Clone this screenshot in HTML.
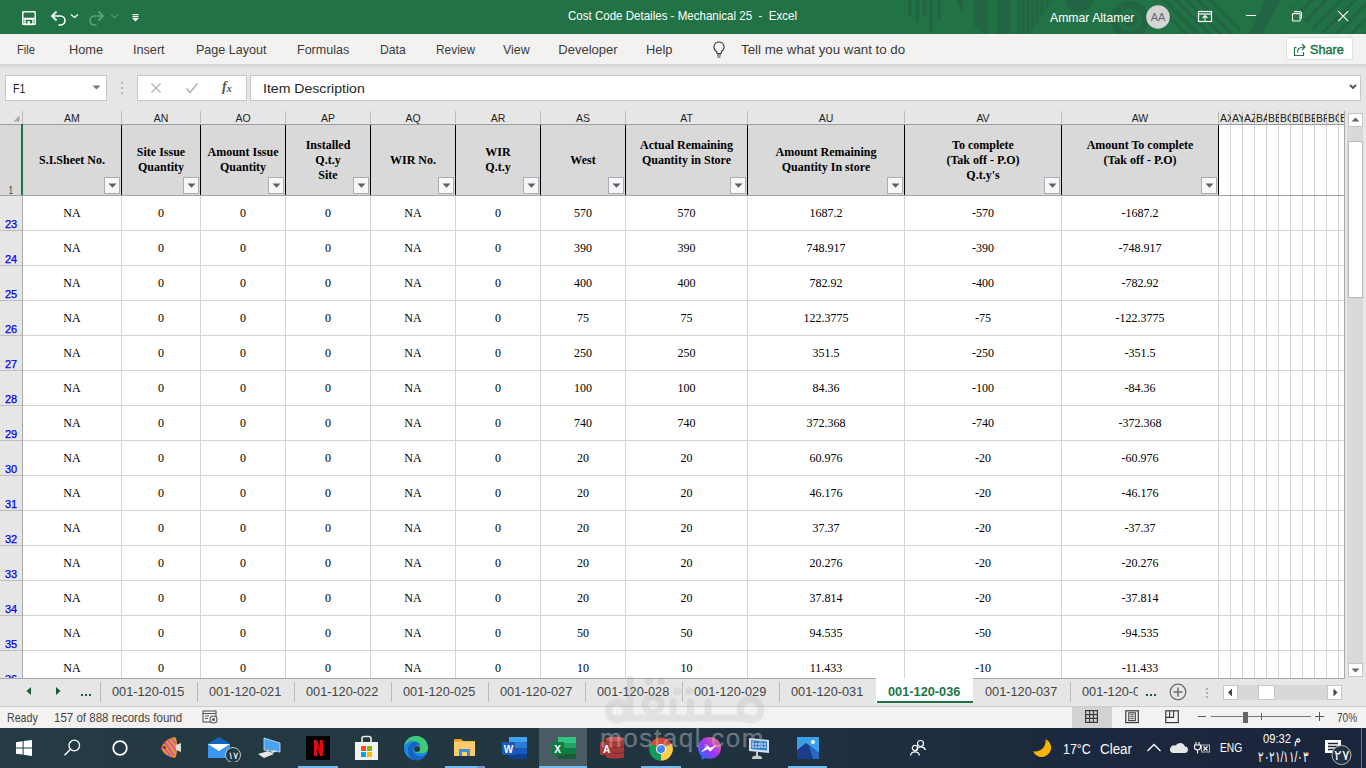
<!DOCTYPE html>
<html><head><meta charset="utf-8"><title>Excel</title>
<style>
html,body{margin:0;padding:0;width:1366px;height:768px;overflow:hidden;background:#e6e6e6;font-family:"Liberation Sans",sans-serif}
.r{position:absolute;display:block}
.t{position:absolute;white-space:pre;line-height:20px;height:20px}
</style></head><body>
<div class="r" style="left:0px;top:0px;width:1366px;height:34px;background:#217346"></div>
<svg class="r" style="left:880px;top:0px;" width="486" height="34" viewBox="0 0 486 34"><rect x="28.3" y="0" width="3.7" height="15.4" fill="#226443"/><rect x="35.3" y="0" width="4.0" height="22.7" fill="#226443"/><rect x="42.2" y="0" width="4.4" height="16.8" fill="#226443"/><rect x="49.1" y="0" width="4.1" height="31.5" fill="#226443"/><rect x="57.3" y="0" width="3.5" height="19.8" fill="#226443"/><path d="M75.5 0H83V13.5z" fill="#226443"/><path d="M94.20000000000005 0H107.39999999999998V34H105L94.20000000000005 26z" fill="#226443"/><rect x="117" y="0" width="12.6" height="34" fill="#226443"/><clipPath id="c1"><path d="M136 0H172L150 34H136z"/></clipPath><g clip-path="url(#c1)"><rect x="137.0" y="0" width="3.4" height="34" fill="#226443"/><rect x="141.7" y="0" width="3.4" height="34" fill="#226443"/><rect x="146.4" y="0" width="3.4" height="34" fill="#226443"/><rect x="151.1" y="0" width="3.4" height="34" fill="#226443"/><rect x="155.8" y="0" width="3.4" height="34" fill="#226443"/><rect x="160.5" y="0" width="3.4" height="34" fill="#226443"/><rect x="165.2" y="0" width="3.4" height="34" fill="#226443"/><rect x="169.9" y="0" width="3.4" height="34" fill="#226443"/></g><circle cx="199" cy="-2" r="14" fill="#226443"/><circle cx="250" cy="20" r="15.5" fill="none" stroke="#226443" stroke-width="7.6"/><circle cx="250" cy="20" r="7" fill="#226443"/><clipPath id="c2"><rect x="280" y="0" width="80" height="34"/></clipPath><g clip-path="url(#c2)"><path d="M270.0 0h4.5l34 34h-4.5z" fill="#226443"/><path d="M281.5 0h4.5l34 34h-4.5z" fill="#226443"/><path d="M293.0 0h4.5l34 34h-4.5z" fill="#226443"/><path d="M304.5 0h4.5l34 34h-4.5z" fill="#226443"/><path d="M316.0 0h4.5l34 34h-4.5z" fill="#226443"/><path d="M327.5 0h4.5l34 34h-4.5z" fill="#226443"/></g><path d="M385 0H400Q390 20 382 34H368Q377 20 385 0z" fill="#226443"/><clipPath id="c3"><path d="M410 8L420 0H486V34H438z"/></clipPath><g clip-path="url(#c3)"><path d="M415.0 0h5l-34 34h-5z" fill="#226443"/><path d="M429.6 0h5l-34 34h-5z" fill="#226443"/><path d="M444.2 0h5l-34 34h-5z" fill="#226443"/><path d="M458.8 0h5l-34 34h-5z" fill="#226443"/><path d="M473.4 0h5l-34 34h-5z" fill="#226443"/><path d="M488.0 0h5l-34 34h-5z" fill="#226443"/><path d="M502.6 0h5l-34 34h-5z" fill="#226443"/><path d="M517.2 0h5l-34 34h-5z" fill="#226443"/></g></svg>
<svg class="r" style="left:20px;top:9px;" width="18" height="18" viewBox="0 0 18 18"><rect x="2.75" y="2.75" width="12.5" height="12.5" rx="0.8" fill="none" stroke="#fff" stroke-width="1.5"/><path d="M2.75 9.5h12.5" stroke="#fff" stroke-width="1.5"/><rect x="5" y="10" width="8" height="5.5" fill="none" stroke="#fff" stroke-width="1.4"/><rect x="7.6" y="12" width="2.2" height="3.5" fill="#fff"/></svg>
<svg class="r" style="left:49px;top:9px;" width="18" height="18" viewBox="0 0 18 18"><path d="M4 7h7.5a4.5 4.5 0 0 1 0 9h-2" fill="none" stroke="#fff" stroke-width="1.6"/><path d="M7.5 2.5L3 7l4.5 4.5" fill="none" stroke="#fff" stroke-width="1.8"/></svg>
<svg class="r" style="left:70px;top:13px;" width="9" height="6" viewBox="0 0 9 6"><path d="M1 1.5l3.5 3 3.5-3" fill="none" stroke="#fff" stroke-width="1.3"/></svg>
<svg class="r" style="left:88px;top:9px;" width="18" height="18" viewBox="0 0 18 18"><path d="M14 7H6.5a4.5 4.5 0 0 0 0 9h2" fill="none" stroke="#5fa27c" stroke-width="1.6"/><path d="M10.5 2.5L15 7l-4.5 4.5" fill="none" stroke="#5fa27c" stroke-width="1.8"/></svg>
<svg class="r" style="left:110px;top:13px;" width="9" height="6" viewBox="0 0 9 6"><path d="M1 1.5l3.5 3 3.5-3" fill="none" stroke="#4f9670" stroke-width="1.1"/></svg>
<svg class="r" style="left:131px;top:13px;" width="9" height="9" viewBox="0 0 9 9"><rect x="1.5" y="1" width="6" height="1.2" fill="#fff"/><rect x="1.5" y="3" width="6" height="1.2" fill="#fff"/><path d="M1 5h7l-3.5 3.5z" fill="#fff"/></svg>
<div class="t" style="left:567.5px;top:6px;font-size:13px;font-family:'Liberation Sans', sans-serif;font-weight:400;color:#fff;transform:scaleX(0.8876);transform-origin:0 0;">Cost Code Detailes - Mechanical 25  -  Excel</div>
<div class="t" style="left:1050.2px;top:8px;font-size:13px;font-family:'Liberation Sans', sans-serif;font-weight:400;color:#fff;transform:scaleX(0.9411);transform-origin:0 0;">Ammar Altamer</div>
<svg class="r" style="left:1146px;top:5px;" width="24" height="24" viewBox="0 0 24 24"><circle cx="12" cy="12" r="11.8" fill="#d4d4d4"/><text x="12" y="16" font-family="Liberation Sans" font-size="11" fill="#66667a" text-anchor="middle">AA</text></svg>
<svg class="r" style="left:1197px;top:10px;" width="16" height="13" viewBox="0 0 16 13"><rect x="1.5" y="1.5" width="13" height="10" fill="none" stroke="#fff" stroke-width="1.2"/><line x1="1.5" y1="4" x2="14.5" y2="4" stroke="#fff" stroke-width="1.2"/><path d="M5.5 8l2.5-2.5 2.5 2.5M8 5.5v6" fill="none" stroke="#fff" stroke-width="1.1"/></svg>
<div class="r" style="left:1246px;top:15px;width:10px;height:1px;background:#fff"></div>
<svg class="r" style="left:1290px;top:10px;" width="14" height="13" viewBox="0 0 14 13"><rect x="2.5" y="3.6" width="7.6" height="7.4" rx="0.8" fill="none" stroke="#fff" stroke-width="1.1"/><path d="M4.2 1.6H10a1.5 1.5 0 0 1 1.5 1.5V8.6" fill="none" stroke="#fff" stroke-width="1.1"/></svg>
<svg class="r" style="left:1337px;top:10px;" width="12" height="12" viewBox="0 0 12 12"><path d="M1.2 1.2l10 10M11.2 1.2l-10 10" stroke="#fff" stroke-width="1.1"/></svg>
<div class="r" style="left:0px;top:34px;width:1366px;height:30px;background:#f3f2f1"></div>
<div class="r" style="left:0px;top:64px;width:1366px;height:5px;background:linear-gradient(#d2d2d2,#e6e6e6)"></div>
<div class="r" style="left:0px;top:69px;width:1366px;height:42px;background:#e6e6e6"></div>
<div class="t" style="left:17.3px;top:40px;font-size:13px;font-family:'Liberation Sans', sans-serif;font-weight:400;color:#3b3a39;transform:scaleX(0.8638);transform-origin:0 0;">File</div>
<div class="t" style="left:69.3px;top:40px;font-size:13px;font-family:'Liberation Sans', sans-serif;font-weight:400;color:#3b3a39;transform:scaleX(0.9831);transform-origin:0 0;">Home</div>
<div class="t" style="left:133.2px;top:40px;font-size:13px;font-family:'Liberation Sans', sans-serif;font-weight:400;color:#3b3a39;transform:scaleX(0.9718);transform-origin:0 0;">Insert</div>
<div class="t" style="left:196.4px;top:40px;font-size:13px;font-family:'Liberation Sans', sans-serif;font-weight:400;color:#3b3a39;transform:scaleX(0.9640);transform-origin:0 0;">Page Layout</div>
<div class="t" style="left:297.1px;top:40px;font-size:13px;font-family:'Liberation Sans', sans-serif;font-weight:400;color:#3b3a39;transform:scaleX(0.9633);transform-origin:0 0;">Formulas</div>
<div class="t" style="left:379.6px;top:40px;font-size:13px;font-family:'Liberation Sans', sans-serif;font-weight:400;color:#3b3a39;transform:scaleX(0.9392);transform-origin:0 0;">Data</div>
<div class="t" style="left:435.5px;top:40px;font-size:13px;font-family:'Liberation Sans', sans-serif;font-weight:400;color:#3b3a39;transform:scaleX(0.9146);transform-origin:0 0;">Review</div>
<div class="t" style="left:503.2px;top:40px;font-size:13px;font-family:'Liberation Sans', sans-serif;font-weight:400;color:#3b3a39;transform:scaleX(0.9552);transform-origin:0 0;">View</div>
<div class="t" style="left:558.3px;top:40px;font-size:13px;font-family:'Liberation Sans', sans-serif;font-weight:400;color:#3b3a39;">Developer</div>
<div class="t" style="left:645.9px;top:40px;font-size:13px;font-family:'Liberation Sans', sans-serif;font-weight:400;color:#3b3a39;transform:scaleX(0.9869);transform-origin:0 0;">Help</div>
<svg class="r" style="left:711px;top:40px;" width="16" height="19" viewBox="0 0 16 19"><path d="M8 2a5 5 0 0 0-3 9c.8.7 1 1.5 1 2.5h4c0-1 .2-1.8 1-2.5a5 5 0 0 0-3-9z" fill="none" stroke="#3b3a39" stroke-width="1.1"/><path d="M6 15h4M6.5 17h3" stroke="#3b3a39" stroke-width="1.1"/></svg>
<div class="t" style="left:740.9px;top:40px;font-size:13px;font-family:'Liberation Sans', sans-serif;font-weight:400;color:#3b3a39;transform:scaleX(1.0234);transform-origin:0 0;">Tell me what you want to do</div>
<div class="r" style="left:1286px;top:37px;width:67px;height:23px;background:#fff;border:1px solid #e1dfdd;border-radius:2px;box-sizing:border-box"></div>
<svg class="r" style="left:1293px;top:42px;" width="14" height="14" viewBox="0 0 14 14"><path d="M1.5 5.5v8h9v-3.5" fill="none" stroke="#217346" stroke-width="1.2"/><path d="M1.5 5.5h2" stroke="#217346" stroke-width="1.2"/><path d="M4.5 10.5c0-3.5 2.5-5.5 6.5-5.5M9 2l3 3-3 3" fill="none" stroke="#217346" stroke-width="1.2"/></svg>
<div class="t" style="left:1310.0px;top:40px;font-size:13px;font-family:'Liberation Sans', sans-serif;font-weight:400;color:#217346;transform:scaleX(0.9740);transform-origin:0 0;-webkit-text-stroke:0.45px #217346;">Share</div>
<div class="r" style="left:5px;top:75px;width:102px;height:26px;background:#fff;border:1px solid #c6c6c6;box-sizing:border-box"></div>
<div class="t" style="left:12.7px;top:79px;font-size:13px;font-family:'Liberation Sans', sans-serif;font-weight:400;color:#262626;transform:scaleX(0.8107);transform-origin:0 0;">F1</div>
<svg class="r" style="left:92px;top:85px;" width="9" height="5" viewBox="0 0 9 5"><path d="M0.5 0.5h8l-4 4z" fill="#777"/></svg>
<div class="r" style="left:121px;top:82px;width:2px;height:2px;background:#a6a6a6;border-radius:1px"></div>
<div class="r" style="left:121px;top:87px;width:2px;height:2px;background:#a6a6a6;border-radius:1px"></div>
<div class="r" style="left:121px;top:92px;width:2px;height:2px;background:#a6a6a6;border-radius:1px"></div>
<div class="r" style="left:137px;top:75px;width:110px;height:26px;background:#fff;border:1px solid #c6c6c6;box-sizing:border-box"></div>
<svg class="r" style="left:150px;top:82px;" width="12" height="12" viewBox="0 0 12 12"><path d="M1.5 1.5l9 9M10.5 1.5l-9 9" stroke="#b3b3b3" stroke-width="1.3"/></svg>
<svg class="r" style="left:185px;top:82px;" width="14" height="12" viewBox="0 0 14 12"><path d="M1.5 6.5l3.5 4 7.5-9" fill="none" stroke="#b3b3b3" stroke-width="1.6"/></svg>
<div class="t" style="left:222px;top:79px;font:italic bold 14px 'Liberation Serif', serif;color:#555">f<span style="font-size:10px;position:relative;top:1px">x</span></div>
<div class="r" style="left:250px;top:75px;width:1111px;height:26px;background:#fff;border:1px solid #c6c6c6;box-sizing:border-box"></div>
<div class="t" style="left:262.6px;top:79px;font-size:13px;font-family:'Liberation Sans', sans-serif;font-weight:400;color:#262626;transform:scaleX(1.0837);transform-origin:0 0;">Item Description</div>
<svg class="r" style="left:1349px;top:84px;" width="8" height="6" viewBox="0 0 8 6"><path d="M1 1l3 3 3-3" fill="none" stroke="#555" stroke-width="1.9"/></svg>
<div class="r" style="left:0px;top:111px;width:1347px;height:13px;background:#e6e6e6"></div>
<div class="r" style="left:0px;top:124px;width:1347px;height:1px;background:#9f9f9f"></div>
<svg class="r" style="left:13px;top:115px;" width="7" height="7" viewBox="0 0 7 7"><path d="M6.5 0.5v6h-6z" fill="#a9a9a9"/></svg>
<div class="r" style="left:22px;top:111px;width:1px;height:13px;background:#bcbcbc"></div>
<div class="r" style="left:121px;top:111px;width:1px;height:13px;background:#bcbcbc"></div>
<div class="t" style="left:64.1px;top:108px;font-size:10.5px;font-family:'Liberation Sans', sans-serif;font-weight:400;color:#222;">AM</div>
<div class="r" style="left:200px;top:111px;width:1px;height:13px;background:#bcbcbc"></div>
<div class="t" style="left:153.7px;top:108px;font-size:10.5px;font-family:'Liberation Sans', sans-serif;font-weight:400;color:#222;">AN</div>
<div class="r" style="left:285px;top:111px;width:1px;height:13px;background:#bcbcbc"></div>
<div class="t" style="left:235.4px;top:108px;font-size:10.5px;font-family:'Liberation Sans', sans-serif;font-weight:400;color:#222;">AO</div>
<div class="r" style="left:370px;top:111px;width:1px;height:13px;background:#bcbcbc"></div>
<div class="t" style="left:321.0px;top:108px;font-size:10.5px;font-family:'Liberation Sans', sans-serif;font-weight:400;color:#222;">AP</div>
<div class="r" style="left:455px;top:111px;width:1px;height:13px;background:#bcbcbc"></div>
<div class="t" style="left:405.4px;top:108px;font-size:10.5px;font-family:'Liberation Sans', sans-serif;font-weight:400;color:#222;">AQ</div>
<div class="r" style="left:540px;top:111px;width:1px;height:13px;background:#bcbcbc"></div>
<div class="t" style="left:490.7px;top:108px;font-size:10.5px;font-family:'Liberation Sans', sans-serif;font-weight:400;color:#222;">AR</div>
<div class="r" style="left:625px;top:111px;width:1px;height:13px;background:#bcbcbc"></div>
<div class="t" style="left:576.0px;top:108px;font-size:10.5px;font-family:'Liberation Sans', sans-serif;font-weight:400;color:#222;">AS</div>
<div class="r" style="left:747px;top:111px;width:1px;height:13px;background:#bcbcbc"></div>
<div class="t" style="left:680.2px;top:108px;font-size:10.5px;font-family:'Liberation Sans', sans-serif;font-weight:400;color:#222;">AT</div>
<div class="r" style="left:904px;top:111px;width:1px;height:13px;background:#bcbcbc"></div>
<div class="t" style="left:818.7px;top:108px;font-size:10.5px;font-family:'Liberation Sans', sans-serif;font-weight:400;color:#222;">AU</div>
<div class="r" style="left:1061px;top:111px;width:1px;height:13px;background:#bcbcbc"></div>
<div class="t" style="left:976.4px;top:108px;font-size:10.5px;font-family:'Liberation Sans', sans-serif;font-weight:400;color:#222;">AV</div>
<div class="r" style="left:1218px;top:111px;width:1px;height:13px;background:#bcbcbc"></div>
<div class="t" style="left:1131.7px;top:108px;font-size:10.5px;font-family:'Liberation Sans', sans-serif;font-weight:400;color:#222;">AW</div>
<div class="r" style="left:1230px;top:111px;width:1px;height:13px;background:#bcbcbc"></div>
<div class="r" style="left:1219px;top:111px;width:12px;height:13px;overflow:hidden"><div class="t" style="left:1px;top:-3px;font-size:10.5px;color:#222">AX</div></div>
<div class="r" style="left:1242px;top:111px;width:1px;height:13px;background:#bcbcbc"></div>
<div class="r" style="left:1231px;top:111px;width:12px;height:13px;overflow:hidden"><div class="t" style="left:1px;top:-3px;font-size:10.5px;color:#222">AY</div></div>
<div class="r" style="left:1254px;top:111px;width:1px;height:13px;background:#bcbcbc"></div>
<div class="r" style="left:1243px;top:111px;width:12px;height:13px;overflow:hidden"><div class="t" style="left:1px;top:-3px;font-size:10.5px;color:#222">AZ</div></div>
<div class="r" style="left:1266px;top:111px;width:1px;height:13px;background:#bcbcbc"></div>
<div class="r" style="left:1255px;top:111px;width:12px;height:13px;overflow:hidden"><div class="t" style="left:1px;top:-3px;font-size:10.5px;color:#222">BA</div></div>
<div class="r" style="left:1278px;top:111px;width:1px;height:13px;background:#bcbcbc"></div>
<div class="r" style="left:1267px;top:111px;width:12px;height:13px;overflow:hidden"><div class="t" style="left:1px;top:-3px;font-size:10.5px;color:#222">BB</div></div>
<div class="r" style="left:1290px;top:111px;width:1px;height:13px;background:#bcbcbc"></div>
<div class="r" style="left:1279px;top:111px;width:12px;height:13px;overflow:hidden"><div class="t" style="left:1px;top:-3px;font-size:10.5px;color:#222">BC</div></div>
<div class="r" style="left:1302px;top:111px;width:1px;height:13px;background:#bcbcbc"></div>
<div class="r" style="left:1291px;top:111px;width:12px;height:13px;overflow:hidden"><div class="t" style="left:1px;top:-3px;font-size:10.5px;color:#222">BD</div></div>
<div class="r" style="left:1314px;top:111px;width:1px;height:13px;background:#bcbcbc"></div>
<div class="r" style="left:1303px;top:111px;width:12px;height:13px;overflow:hidden"><div class="t" style="left:1px;top:-3px;font-size:10.5px;color:#222">BE</div></div>
<div class="r" style="left:1326px;top:111px;width:1px;height:13px;background:#bcbcbc"></div>
<div class="r" style="left:1315px;top:111px;width:12px;height:13px;overflow:hidden"><div class="t" style="left:1px;top:-3px;font-size:10.5px;color:#222">BF</div></div>
<div class="r" style="left:1338px;top:111px;width:1px;height:13px;background:#bcbcbc"></div>
<div class="r" style="left:1327px;top:111px;width:12px;height:13px;overflow:hidden"><div class="t" style="left:1px;top:-3px;font-size:10.5px;color:#222">BG</div></div>
<div class="r" style="left:1350px;top:111px;width:1px;height:13px;background:#bcbcbc"></div>
<div class="r" style="left:1339px;top:111px;width:12px;height:13px;overflow:hidden"><div class="t" style="left:1px;top:-3px;font-size:10.5px;color:#222">BH</div></div>
<div class="r" style="left:0px;top:125px;width:22px;height:553px;background:#e6e6e6"></div>
<div class="r" style="left:22px;top:125px;width:1px;height:553px;background:#a9a9a9"></div>
<div class="r" style="left:0px;top:125px;width:21px;height:70px;background:#d9d9d9"></div>
<div class="r" style="left:21px;top:124px;width:2px;height:71px;background:#217346"></div>
<div class="t" style="left:9.3px;top:181px;font-size:10px;font-family:'Liberation Sans', sans-serif;font-weight:400;color:#444;transform:scaleX(0.6652);transform-origin:0 0;-webkit-text-stroke:0.2px #444;">1</div>
<div class="r" style="left:23px;top:125px;width:1322px;height:70px;background:#d9d9d9"></div>
<div class="r" style="left:1218px;top:125px;width:127px;height:70px;background:#fff"></div>
<div class="r" style="left:0px;top:195px;width:1345px;height:1px;background:#a3a3a3"></div>
<div class="r" style="left:121px;top:125px;width:1px;height:70px;background:#000"></div>
<div class="r" style="left:200px;top:125px;width:1px;height:70px;background:#000"></div>
<div class="r" style="left:285px;top:125px;width:1px;height:70px;background:#000"></div>
<div class="r" style="left:370px;top:125px;width:1px;height:70px;background:#000"></div>
<div class="r" style="left:455px;top:125px;width:1px;height:70px;background:#000"></div>
<div class="r" style="left:540px;top:125px;width:1px;height:70px;background:#000"></div>
<div class="r" style="left:625px;top:125px;width:1px;height:70px;background:#000"></div>
<div class="r" style="left:747px;top:125px;width:1px;height:70px;background:#000"></div>
<div class="r" style="left:904px;top:125px;width:1px;height:70px;background:#000"></div>
<div class="r" style="left:1061px;top:125px;width:1px;height:70px;background:#000"></div>
<div class="r" style="left:1218px;top:125px;width:1px;height:70px;background:#000"></div>
<div class="r" style="left:1230px;top:125px;width:1px;height:70px;background:#d4d4d4"></div>
<div class="r" style="left:1242px;top:125px;width:1px;height:70px;background:#d4d4d4"></div>
<div class="r" style="left:1254px;top:125px;width:1px;height:70px;background:#d4d4d4"></div>
<div class="r" style="left:1266px;top:125px;width:1px;height:70px;background:#d4d4d4"></div>
<div class="r" style="left:1278px;top:125px;width:1px;height:70px;background:#d4d4d4"></div>
<div class="r" style="left:1290px;top:125px;width:1px;height:70px;background:#d4d4d4"></div>
<div class="r" style="left:1302px;top:125px;width:1px;height:70px;background:#d4d4d4"></div>
<div class="r" style="left:1314px;top:125px;width:1px;height:70px;background:#d4d4d4"></div>
<div class="r" style="left:1326px;top:125px;width:1px;height:70px;background:#d4d4d4"></div>
<div class="r" style="left:1338px;top:125px;width:1px;height:70px;background:#d4d4d4"></div>
<div class="r" style="left:1350px;top:125px;width:1px;height:70px;background:#d4d4d4"></div>
<div class="t" style="left:23px;width:98px;top:152.5px;line-height:20px;text-align:center;font:bold 12px 'Liberation Serif', serif;color:#000">S.I.Sheet No.</div>
<div class="r" style="left:104px;top:177px;width:16px;height:17px;background:#f7f7f9;border:1px solid #a8aeb4;box-sizing:border-box"></div>
<svg class="r" style="left:108px;top:183px;" width="9" height="5" viewBox="0 0 9 5"><path d="M0.5 0.5h8l-4 4.2z" fill="#5f5f5f"/></svg>
<div class="t" style="left:122px;width:78px;top:145.0px;line-height:20px;text-align:center;font:bold 12px 'Liberation Serif', serif;color:#000">Site Issue</div>
<div class="t" style="left:122px;width:78px;top:160.0px;line-height:20px;text-align:center;font:bold 12px 'Liberation Serif', serif;color:#000">Quantity</div>
<div class="r" style="left:183px;top:177px;width:16px;height:17px;background:#f7f7f9;border:1px solid #a8aeb4;box-sizing:border-box"></div>
<svg class="r" style="left:187px;top:183px;" width="9" height="5" viewBox="0 0 9 5"><path d="M0.5 0.5h8l-4 4.2z" fill="#5f5f5f"/></svg>
<div class="t" style="left:201px;width:84px;top:145.0px;line-height:20px;text-align:center;font:bold 12px 'Liberation Serif', serif;color:#000">Amount Issue</div>
<div class="t" style="left:201px;width:84px;top:160.0px;line-height:20px;text-align:center;font:bold 12px 'Liberation Serif', serif;color:#000">Quantity</div>
<div class="r" style="left:268px;top:177px;width:16px;height:17px;background:#f7f7f9;border:1px solid #a8aeb4;box-sizing:border-box"></div>
<svg class="r" style="left:272px;top:183px;" width="9" height="5" viewBox="0 0 9 5"><path d="M0.5 0.5h8l-4 4.2z" fill="#5f5f5f"/></svg>
<div class="t" style="left:286px;width:84px;top:137.5px;line-height:20px;text-align:center;font:bold 12px 'Liberation Serif', serif;color:#000">Installed</div>
<div class="t" style="left:286px;width:84px;top:152.5px;line-height:20px;text-align:center;font:bold 12px 'Liberation Serif', serif;color:#000">Q.t.y</div>
<div class="t" style="left:286px;width:84px;top:167.5px;line-height:20px;text-align:center;font:bold 12px 'Liberation Serif', serif;color:#000">Site</div>
<div class="r" style="left:353px;top:177px;width:16px;height:17px;background:#f7f7f9;border:1px solid #a8aeb4;box-sizing:border-box"></div>
<svg class="r" style="left:357px;top:183px;" width="9" height="5" viewBox="0 0 9 5"><path d="M0.5 0.5h8l-4 4.2z" fill="#5f5f5f"/></svg>
<div class="t" style="left:371px;width:84px;top:152.5px;line-height:20px;text-align:center;font:bold 12px 'Liberation Serif', serif;color:#000">WIR No.</div>
<div class="r" style="left:438px;top:177px;width:16px;height:17px;background:#f7f7f9;border:1px solid #a8aeb4;box-sizing:border-box"></div>
<svg class="r" style="left:442px;top:183px;" width="9" height="5" viewBox="0 0 9 5"><path d="M0.5 0.5h8l-4 4.2z" fill="#5f5f5f"/></svg>
<div class="t" style="left:456px;width:84px;top:145.0px;line-height:20px;text-align:center;font:bold 12px 'Liberation Serif', serif;color:#000">WIR</div>
<div class="t" style="left:456px;width:84px;top:160.0px;line-height:20px;text-align:center;font:bold 12px 'Liberation Serif', serif;color:#000">Q.t.y</div>
<div class="r" style="left:523px;top:177px;width:16px;height:17px;background:#f7f7f9;border:1px solid #a8aeb4;box-sizing:border-box"></div>
<svg class="r" style="left:527px;top:183px;" width="9" height="5" viewBox="0 0 9 5"><path d="M0.5 0.5h8l-4 4.2z" fill="#5f5f5f"/></svg>
<div class="t" style="left:541px;width:84px;top:152.5px;line-height:20px;text-align:center;font:bold 12px 'Liberation Serif', serif;color:#000">West</div>
<div class="r" style="left:608px;top:177px;width:16px;height:17px;background:#f7f7f9;border:1px solid #a8aeb4;box-sizing:border-box"></div>
<svg class="r" style="left:612px;top:183px;" width="9" height="5" viewBox="0 0 9 5"><path d="M0.5 0.5h8l-4 4.2z" fill="#5f5f5f"/></svg>
<div class="t" style="left:626px;width:121px;top:137.5px;line-height:20px;text-align:center;font:bold 12px 'Liberation Serif', serif;color:#000">Actual Remaining</div>
<div class="t" style="left:626px;width:121px;top:152.5px;line-height:20px;text-align:center;font:bold 12px 'Liberation Serif', serif;color:#000">Quantity in Store</div>
<div class="r" style="left:730px;top:177px;width:16px;height:17px;background:#f7f7f9;border:1px solid #a8aeb4;box-sizing:border-box"></div>
<svg class="r" style="left:734px;top:183px;" width="9" height="5" viewBox="0 0 9 5"><path d="M0.5 0.5h8l-4 4.2z" fill="#5f5f5f"/></svg>
<div class="t" style="left:748px;width:156px;top:145.0px;line-height:20px;text-align:center;font:bold 12px 'Liberation Serif', serif;color:#000">Amount Remaining</div>
<div class="t" style="left:748px;width:156px;top:160.0px;line-height:20px;text-align:center;font:bold 12px 'Liberation Serif', serif;color:#000">Quantity In store</div>
<div class="r" style="left:887px;top:177px;width:16px;height:17px;background:#f7f7f9;border:1px solid #a8aeb4;box-sizing:border-box"></div>
<svg class="r" style="left:891px;top:183px;" width="9" height="5" viewBox="0 0 9 5"><path d="M0.5 0.5h8l-4 4.2z" fill="#5f5f5f"/></svg>
<div class="t" style="left:905px;width:156px;top:137.5px;line-height:20px;text-align:center;font:bold 12px 'Liberation Serif', serif;color:#000">To complete</div>
<div class="t" style="left:905px;width:156px;top:152.5px;line-height:20px;text-align:center;font:bold 12px 'Liberation Serif', serif;color:#000">(Tak off - P.O)</div>
<div class="t" style="left:905px;width:156px;top:167.5px;line-height:20px;text-align:center;font:bold 12px 'Liberation Serif', serif;color:#000">Q.t.y's</div>
<div class="r" style="left:1044px;top:177px;width:16px;height:17px;background:#f7f7f9;border:1px solid #a8aeb4;box-sizing:border-box"></div>
<svg class="r" style="left:1048px;top:183px;" width="9" height="5" viewBox="0 0 9 5"><path d="M0.5 0.5h8l-4 4.2z" fill="#5f5f5f"/></svg>
<div class="t" style="left:1062px;width:156px;top:137.5px;line-height:20px;text-align:center;font:bold 12px 'Liberation Serif', serif;color:#000">Amount To complete</div>
<div class="t" style="left:1062px;width:156px;top:152.5px;line-height:20px;text-align:center;font:bold 12px 'Liberation Serif', serif;color:#000">(Tak off - P.O)</div>
<div class="r" style="left:1201px;top:177px;width:16px;height:17px;background:#f7f7f9;border:1px solid #a8aeb4;box-sizing:border-box"></div>
<svg class="r" style="left:1205px;top:183px;" width="9" height="5" viewBox="0 0 9 5"><path d="M0.5 0.5h8l-4 4.2z" fill="#5f5f5f"/></svg>
<div class="r" style="left:23px;top:196px;width:1322px;height:482px;background:#fff"></div>
<div class="r" style="left:121px;top:196px;width:1px;height:482px;background:#d4d4d4"></div>
<div class="r" style="left:200px;top:196px;width:1px;height:482px;background:#d4d4d4"></div>
<div class="r" style="left:285px;top:196px;width:1px;height:482px;background:#d4d4d4"></div>
<div class="r" style="left:370px;top:196px;width:1px;height:482px;background:#d4d4d4"></div>
<div class="r" style="left:455px;top:196px;width:1px;height:482px;background:#d4d4d4"></div>
<div class="r" style="left:540px;top:196px;width:1px;height:482px;background:#d4d4d4"></div>
<div class="r" style="left:625px;top:196px;width:1px;height:482px;background:#d4d4d4"></div>
<div class="r" style="left:747px;top:196px;width:1px;height:482px;background:#d4d4d4"></div>
<div class="r" style="left:904px;top:196px;width:1px;height:482px;background:#d4d4d4"></div>
<div class="r" style="left:1061px;top:196px;width:1px;height:482px;background:#d4d4d4"></div>
<div class="r" style="left:1218px;top:196px;width:1px;height:482px;background:#d4d4d4"></div>
<div class="r" style="left:1230px;top:196px;width:1px;height:482px;background:#d4d4d4"></div>
<div class="r" style="left:1242px;top:196px;width:1px;height:482px;background:#d4d4d4"></div>
<div class="r" style="left:1254px;top:196px;width:1px;height:482px;background:#d4d4d4"></div>
<div class="r" style="left:1266px;top:196px;width:1px;height:482px;background:#d4d4d4"></div>
<div class="r" style="left:1278px;top:196px;width:1px;height:482px;background:#d4d4d4"></div>
<div class="r" style="left:1290px;top:196px;width:1px;height:482px;background:#d4d4d4"></div>
<div class="r" style="left:1302px;top:196px;width:1px;height:482px;background:#d4d4d4"></div>
<div class="r" style="left:1314px;top:196px;width:1px;height:482px;background:#d4d4d4"></div>
<div class="r" style="left:1326px;top:196px;width:1px;height:482px;background:#d4d4d4"></div>
<div class="r" style="left:1338px;top:196px;width:1px;height:482px;background:#d4d4d4"></div>
<div class="r" style="left:1350px;top:196px;width:1px;height:482px;background:#d4d4d4"></div>
<div class="r" style="left:23px;top:230px;width:1322px;height:1px;background:#d4d4d4"></div>
<div class="r" style="left:0px;top:230px;width:22px;height:1px;background:#bdbdbd"></div>
<div class="t" style="left:5.0px;top:215px;font-size:10px;font-family:'Liberation Sans', sans-serif;font-weight:400;color:#0000f0;transform:scaleX(1.0966);transform-origin:0 0;-webkit-text-stroke:0.25px #0000f0;">23</div>
<div class="t" style="left:23px;width:98px;top:206px;line-height:20px;text-align:center;font:12px 'Liberation Serif', serif;color:#000">NA</div>
<div class="t" style="left:122px;width:78px;top:206px;line-height:20px;text-align:center;font:12px 'Liberation Serif', serif;color:#000">0</div>
<div class="t" style="left:201px;width:84px;top:206px;line-height:20px;text-align:center;font:12px 'Liberation Serif', serif;color:#000">0</div>
<div class="t" style="left:286px;width:84px;top:206px;line-height:20px;text-align:center;font:12px 'Liberation Serif', serif;color:#000">0</div>
<div class="t" style="left:371px;width:84px;top:206px;line-height:20px;text-align:center;font:12px 'Liberation Serif', serif;color:#000">NA</div>
<div class="t" style="left:456px;width:84px;top:206px;line-height:20px;text-align:center;font:12px 'Liberation Serif', serif;color:#000">0</div>
<div class="t" style="left:541px;width:84px;top:206px;line-height:20px;text-align:center;font:12px 'Liberation Serif', serif;color:#000">570</div>
<div class="t" style="left:626px;width:121px;top:206px;line-height:20px;text-align:center;font:12px 'Liberation Serif', serif;color:#000">570</div>
<div class="t" style="left:748px;width:156px;top:206px;line-height:20px;text-align:center;font:12px 'Liberation Serif', serif;color:#000">1687.2</div>
<div class="t" style="left:905px;width:156px;top:206px;line-height:20px;text-align:center;font:12px 'Liberation Serif', serif;color:#000">-570</div>
<div class="t" style="left:1062px;width:156px;top:206px;line-height:20px;text-align:center;font:12px 'Liberation Serif', serif;color:#000">-1687.2</div>
<div class="r" style="left:23px;top:265px;width:1322px;height:1px;background:#d4d4d4"></div>
<div class="r" style="left:0px;top:265px;width:22px;height:1px;background:#bdbdbd"></div>
<div class="t" style="left:5.0px;top:250px;font-size:10px;font-family:'Liberation Sans', sans-serif;font-weight:400;color:#0000f0;transform:scaleX(1.0966);transform-origin:0 0;-webkit-text-stroke:0.25px #0000f0;">24</div>
<div class="t" style="left:23px;width:98px;top:241px;line-height:20px;text-align:center;font:12px 'Liberation Serif', serif;color:#000">NA</div>
<div class="t" style="left:122px;width:78px;top:241px;line-height:20px;text-align:center;font:12px 'Liberation Serif', serif;color:#000">0</div>
<div class="t" style="left:201px;width:84px;top:241px;line-height:20px;text-align:center;font:12px 'Liberation Serif', serif;color:#000">0</div>
<div class="t" style="left:286px;width:84px;top:241px;line-height:20px;text-align:center;font:12px 'Liberation Serif', serif;color:#000">0</div>
<div class="t" style="left:371px;width:84px;top:241px;line-height:20px;text-align:center;font:12px 'Liberation Serif', serif;color:#000">NA</div>
<div class="t" style="left:456px;width:84px;top:241px;line-height:20px;text-align:center;font:12px 'Liberation Serif', serif;color:#000">0</div>
<div class="t" style="left:541px;width:84px;top:241px;line-height:20px;text-align:center;font:12px 'Liberation Serif', serif;color:#000">390</div>
<div class="t" style="left:626px;width:121px;top:241px;line-height:20px;text-align:center;font:12px 'Liberation Serif', serif;color:#000">390</div>
<div class="t" style="left:748px;width:156px;top:241px;line-height:20px;text-align:center;font:12px 'Liberation Serif', serif;color:#000">748.917</div>
<div class="t" style="left:905px;width:156px;top:241px;line-height:20px;text-align:center;font:12px 'Liberation Serif', serif;color:#000">-390</div>
<div class="t" style="left:1062px;width:156px;top:241px;line-height:20px;text-align:center;font:12px 'Liberation Serif', serif;color:#000">-748.917</div>
<div class="r" style="left:23px;top:300px;width:1322px;height:1px;background:#d4d4d4"></div>
<div class="r" style="left:0px;top:300px;width:22px;height:1px;background:#bdbdbd"></div>
<div class="t" style="left:5.0px;top:285px;font-size:10px;font-family:'Liberation Sans', sans-serif;font-weight:400;color:#0000f0;transform:scaleX(1.0966);transform-origin:0 0;-webkit-text-stroke:0.25px #0000f0;">25</div>
<div class="t" style="left:23px;width:98px;top:276px;line-height:20px;text-align:center;font:12px 'Liberation Serif', serif;color:#000">NA</div>
<div class="t" style="left:122px;width:78px;top:276px;line-height:20px;text-align:center;font:12px 'Liberation Serif', serif;color:#000">0</div>
<div class="t" style="left:201px;width:84px;top:276px;line-height:20px;text-align:center;font:12px 'Liberation Serif', serif;color:#000">0</div>
<div class="t" style="left:286px;width:84px;top:276px;line-height:20px;text-align:center;font:12px 'Liberation Serif', serif;color:#000">0</div>
<div class="t" style="left:371px;width:84px;top:276px;line-height:20px;text-align:center;font:12px 'Liberation Serif', serif;color:#000">NA</div>
<div class="t" style="left:456px;width:84px;top:276px;line-height:20px;text-align:center;font:12px 'Liberation Serif', serif;color:#000">0</div>
<div class="t" style="left:541px;width:84px;top:276px;line-height:20px;text-align:center;font:12px 'Liberation Serif', serif;color:#000">400</div>
<div class="t" style="left:626px;width:121px;top:276px;line-height:20px;text-align:center;font:12px 'Liberation Serif', serif;color:#000">400</div>
<div class="t" style="left:748px;width:156px;top:276px;line-height:20px;text-align:center;font:12px 'Liberation Serif', serif;color:#000">782.92</div>
<div class="t" style="left:905px;width:156px;top:276px;line-height:20px;text-align:center;font:12px 'Liberation Serif', serif;color:#000">-400</div>
<div class="t" style="left:1062px;width:156px;top:276px;line-height:20px;text-align:center;font:12px 'Liberation Serif', serif;color:#000">-782.92</div>
<div class="r" style="left:23px;top:335px;width:1322px;height:1px;background:#d4d4d4"></div>
<div class="r" style="left:0px;top:335px;width:22px;height:1px;background:#bdbdbd"></div>
<div class="t" style="left:5.0px;top:320px;font-size:10px;font-family:'Liberation Sans', sans-serif;font-weight:400;color:#0000f0;transform:scaleX(1.0966);transform-origin:0 0;-webkit-text-stroke:0.25px #0000f0;">26</div>
<div class="t" style="left:23px;width:98px;top:311px;line-height:20px;text-align:center;font:12px 'Liberation Serif', serif;color:#000">NA</div>
<div class="t" style="left:122px;width:78px;top:311px;line-height:20px;text-align:center;font:12px 'Liberation Serif', serif;color:#000">0</div>
<div class="t" style="left:201px;width:84px;top:311px;line-height:20px;text-align:center;font:12px 'Liberation Serif', serif;color:#000">0</div>
<div class="t" style="left:286px;width:84px;top:311px;line-height:20px;text-align:center;font:12px 'Liberation Serif', serif;color:#000">0</div>
<div class="t" style="left:371px;width:84px;top:311px;line-height:20px;text-align:center;font:12px 'Liberation Serif', serif;color:#000">NA</div>
<div class="t" style="left:456px;width:84px;top:311px;line-height:20px;text-align:center;font:12px 'Liberation Serif', serif;color:#000">0</div>
<div class="t" style="left:541px;width:84px;top:311px;line-height:20px;text-align:center;font:12px 'Liberation Serif', serif;color:#000">75</div>
<div class="t" style="left:626px;width:121px;top:311px;line-height:20px;text-align:center;font:12px 'Liberation Serif', serif;color:#000">75</div>
<div class="t" style="left:748px;width:156px;top:311px;line-height:20px;text-align:center;font:12px 'Liberation Serif', serif;color:#000">122.3775</div>
<div class="t" style="left:905px;width:156px;top:311px;line-height:20px;text-align:center;font:12px 'Liberation Serif', serif;color:#000">-75</div>
<div class="t" style="left:1062px;width:156px;top:311px;line-height:20px;text-align:center;font:12px 'Liberation Serif', serif;color:#000">-122.3775</div>
<div class="r" style="left:23px;top:370px;width:1322px;height:1px;background:#d4d4d4"></div>
<div class="r" style="left:0px;top:370px;width:22px;height:1px;background:#bdbdbd"></div>
<div class="t" style="left:5.0px;top:355px;font-size:10px;font-family:'Liberation Sans', sans-serif;font-weight:400;color:#0000f0;transform:scaleX(1.0966);transform-origin:0 0;-webkit-text-stroke:0.25px #0000f0;">27</div>
<div class="t" style="left:23px;width:98px;top:346px;line-height:20px;text-align:center;font:12px 'Liberation Serif', serif;color:#000">NA</div>
<div class="t" style="left:122px;width:78px;top:346px;line-height:20px;text-align:center;font:12px 'Liberation Serif', serif;color:#000">0</div>
<div class="t" style="left:201px;width:84px;top:346px;line-height:20px;text-align:center;font:12px 'Liberation Serif', serif;color:#000">0</div>
<div class="t" style="left:286px;width:84px;top:346px;line-height:20px;text-align:center;font:12px 'Liberation Serif', serif;color:#000">0</div>
<div class="t" style="left:371px;width:84px;top:346px;line-height:20px;text-align:center;font:12px 'Liberation Serif', serif;color:#000">NA</div>
<div class="t" style="left:456px;width:84px;top:346px;line-height:20px;text-align:center;font:12px 'Liberation Serif', serif;color:#000">0</div>
<div class="t" style="left:541px;width:84px;top:346px;line-height:20px;text-align:center;font:12px 'Liberation Serif', serif;color:#000">250</div>
<div class="t" style="left:626px;width:121px;top:346px;line-height:20px;text-align:center;font:12px 'Liberation Serif', serif;color:#000">250</div>
<div class="t" style="left:748px;width:156px;top:346px;line-height:20px;text-align:center;font:12px 'Liberation Serif', serif;color:#000">351.5</div>
<div class="t" style="left:905px;width:156px;top:346px;line-height:20px;text-align:center;font:12px 'Liberation Serif', serif;color:#000">-250</div>
<div class="t" style="left:1062px;width:156px;top:346px;line-height:20px;text-align:center;font:12px 'Liberation Serif', serif;color:#000">-351.5</div>
<div class="r" style="left:23px;top:405px;width:1322px;height:1px;background:#d4d4d4"></div>
<div class="r" style="left:0px;top:405px;width:22px;height:1px;background:#bdbdbd"></div>
<div class="t" style="left:5.0px;top:390px;font-size:10px;font-family:'Liberation Sans', sans-serif;font-weight:400;color:#0000f0;transform:scaleX(1.0966);transform-origin:0 0;-webkit-text-stroke:0.25px #0000f0;">28</div>
<div class="t" style="left:23px;width:98px;top:381px;line-height:20px;text-align:center;font:12px 'Liberation Serif', serif;color:#000">NA</div>
<div class="t" style="left:122px;width:78px;top:381px;line-height:20px;text-align:center;font:12px 'Liberation Serif', serif;color:#000">0</div>
<div class="t" style="left:201px;width:84px;top:381px;line-height:20px;text-align:center;font:12px 'Liberation Serif', serif;color:#000">0</div>
<div class="t" style="left:286px;width:84px;top:381px;line-height:20px;text-align:center;font:12px 'Liberation Serif', serif;color:#000">0</div>
<div class="t" style="left:371px;width:84px;top:381px;line-height:20px;text-align:center;font:12px 'Liberation Serif', serif;color:#000">NA</div>
<div class="t" style="left:456px;width:84px;top:381px;line-height:20px;text-align:center;font:12px 'Liberation Serif', serif;color:#000">0</div>
<div class="t" style="left:541px;width:84px;top:381px;line-height:20px;text-align:center;font:12px 'Liberation Serif', serif;color:#000">100</div>
<div class="t" style="left:626px;width:121px;top:381px;line-height:20px;text-align:center;font:12px 'Liberation Serif', serif;color:#000">100</div>
<div class="t" style="left:748px;width:156px;top:381px;line-height:20px;text-align:center;font:12px 'Liberation Serif', serif;color:#000">84.36</div>
<div class="t" style="left:905px;width:156px;top:381px;line-height:20px;text-align:center;font:12px 'Liberation Serif', serif;color:#000">-100</div>
<div class="t" style="left:1062px;width:156px;top:381px;line-height:20px;text-align:center;font:12px 'Liberation Serif', serif;color:#000">-84.36</div>
<div class="r" style="left:23px;top:440px;width:1322px;height:1px;background:#d4d4d4"></div>
<div class="r" style="left:0px;top:440px;width:22px;height:1px;background:#bdbdbd"></div>
<div class="t" style="left:5.0px;top:425px;font-size:10px;font-family:'Liberation Sans', sans-serif;font-weight:400;color:#0000f0;transform:scaleX(1.0966);transform-origin:0 0;-webkit-text-stroke:0.25px #0000f0;">29</div>
<div class="t" style="left:23px;width:98px;top:416px;line-height:20px;text-align:center;font:12px 'Liberation Serif', serif;color:#000">NA</div>
<div class="t" style="left:122px;width:78px;top:416px;line-height:20px;text-align:center;font:12px 'Liberation Serif', serif;color:#000">0</div>
<div class="t" style="left:201px;width:84px;top:416px;line-height:20px;text-align:center;font:12px 'Liberation Serif', serif;color:#000">0</div>
<div class="t" style="left:286px;width:84px;top:416px;line-height:20px;text-align:center;font:12px 'Liberation Serif', serif;color:#000">0</div>
<div class="t" style="left:371px;width:84px;top:416px;line-height:20px;text-align:center;font:12px 'Liberation Serif', serif;color:#000">NA</div>
<div class="t" style="left:456px;width:84px;top:416px;line-height:20px;text-align:center;font:12px 'Liberation Serif', serif;color:#000">0</div>
<div class="t" style="left:541px;width:84px;top:416px;line-height:20px;text-align:center;font:12px 'Liberation Serif', serif;color:#000">740</div>
<div class="t" style="left:626px;width:121px;top:416px;line-height:20px;text-align:center;font:12px 'Liberation Serif', serif;color:#000">740</div>
<div class="t" style="left:748px;width:156px;top:416px;line-height:20px;text-align:center;font:12px 'Liberation Serif', serif;color:#000">372.368</div>
<div class="t" style="left:905px;width:156px;top:416px;line-height:20px;text-align:center;font:12px 'Liberation Serif', serif;color:#000">-740</div>
<div class="t" style="left:1062px;width:156px;top:416px;line-height:20px;text-align:center;font:12px 'Liberation Serif', serif;color:#000">-372.368</div>
<div class="r" style="left:23px;top:475px;width:1322px;height:1px;background:#d4d4d4"></div>
<div class="r" style="left:0px;top:475px;width:22px;height:1px;background:#bdbdbd"></div>
<div class="t" style="left:5.0px;top:460px;font-size:10px;font-family:'Liberation Sans', sans-serif;font-weight:400;color:#0000f0;transform:scaleX(1.0966);transform-origin:0 0;-webkit-text-stroke:0.25px #0000f0;">30</div>
<div class="t" style="left:23px;width:98px;top:451px;line-height:20px;text-align:center;font:12px 'Liberation Serif', serif;color:#000">NA</div>
<div class="t" style="left:122px;width:78px;top:451px;line-height:20px;text-align:center;font:12px 'Liberation Serif', serif;color:#000">0</div>
<div class="t" style="left:201px;width:84px;top:451px;line-height:20px;text-align:center;font:12px 'Liberation Serif', serif;color:#000">0</div>
<div class="t" style="left:286px;width:84px;top:451px;line-height:20px;text-align:center;font:12px 'Liberation Serif', serif;color:#000">0</div>
<div class="t" style="left:371px;width:84px;top:451px;line-height:20px;text-align:center;font:12px 'Liberation Serif', serif;color:#000">NA</div>
<div class="t" style="left:456px;width:84px;top:451px;line-height:20px;text-align:center;font:12px 'Liberation Serif', serif;color:#000">0</div>
<div class="t" style="left:541px;width:84px;top:451px;line-height:20px;text-align:center;font:12px 'Liberation Serif', serif;color:#000">20</div>
<div class="t" style="left:626px;width:121px;top:451px;line-height:20px;text-align:center;font:12px 'Liberation Serif', serif;color:#000">20</div>
<div class="t" style="left:748px;width:156px;top:451px;line-height:20px;text-align:center;font:12px 'Liberation Serif', serif;color:#000">60.976</div>
<div class="t" style="left:905px;width:156px;top:451px;line-height:20px;text-align:center;font:12px 'Liberation Serif', serif;color:#000">-20</div>
<div class="t" style="left:1062px;width:156px;top:451px;line-height:20px;text-align:center;font:12px 'Liberation Serif', serif;color:#000">-60.976</div>
<div class="r" style="left:23px;top:510px;width:1322px;height:1px;background:#d4d4d4"></div>
<div class="r" style="left:0px;top:510px;width:22px;height:1px;background:#bdbdbd"></div>
<div class="t" style="left:5.0px;top:495px;font-size:10px;font-family:'Liberation Sans', sans-serif;font-weight:400;color:#0000f0;transform:scaleX(1.0966);transform-origin:0 0;-webkit-text-stroke:0.25px #0000f0;">31</div>
<div class="t" style="left:23px;width:98px;top:486px;line-height:20px;text-align:center;font:12px 'Liberation Serif', serif;color:#000">NA</div>
<div class="t" style="left:122px;width:78px;top:486px;line-height:20px;text-align:center;font:12px 'Liberation Serif', serif;color:#000">0</div>
<div class="t" style="left:201px;width:84px;top:486px;line-height:20px;text-align:center;font:12px 'Liberation Serif', serif;color:#000">0</div>
<div class="t" style="left:286px;width:84px;top:486px;line-height:20px;text-align:center;font:12px 'Liberation Serif', serif;color:#000">0</div>
<div class="t" style="left:371px;width:84px;top:486px;line-height:20px;text-align:center;font:12px 'Liberation Serif', serif;color:#000">NA</div>
<div class="t" style="left:456px;width:84px;top:486px;line-height:20px;text-align:center;font:12px 'Liberation Serif', serif;color:#000">0</div>
<div class="t" style="left:541px;width:84px;top:486px;line-height:20px;text-align:center;font:12px 'Liberation Serif', serif;color:#000">20</div>
<div class="t" style="left:626px;width:121px;top:486px;line-height:20px;text-align:center;font:12px 'Liberation Serif', serif;color:#000">20</div>
<div class="t" style="left:748px;width:156px;top:486px;line-height:20px;text-align:center;font:12px 'Liberation Serif', serif;color:#000">46.176</div>
<div class="t" style="left:905px;width:156px;top:486px;line-height:20px;text-align:center;font:12px 'Liberation Serif', serif;color:#000">-20</div>
<div class="t" style="left:1062px;width:156px;top:486px;line-height:20px;text-align:center;font:12px 'Liberation Serif', serif;color:#000">-46.176</div>
<div class="r" style="left:23px;top:545px;width:1322px;height:1px;background:#d4d4d4"></div>
<div class="r" style="left:0px;top:545px;width:22px;height:1px;background:#bdbdbd"></div>
<div class="t" style="left:5.0px;top:530px;font-size:10px;font-family:'Liberation Sans', sans-serif;font-weight:400;color:#0000f0;transform:scaleX(1.0966);transform-origin:0 0;-webkit-text-stroke:0.25px #0000f0;">32</div>
<div class="t" style="left:23px;width:98px;top:521px;line-height:20px;text-align:center;font:12px 'Liberation Serif', serif;color:#000">NA</div>
<div class="t" style="left:122px;width:78px;top:521px;line-height:20px;text-align:center;font:12px 'Liberation Serif', serif;color:#000">0</div>
<div class="t" style="left:201px;width:84px;top:521px;line-height:20px;text-align:center;font:12px 'Liberation Serif', serif;color:#000">0</div>
<div class="t" style="left:286px;width:84px;top:521px;line-height:20px;text-align:center;font:12px 'Liberation Serif', serif;color:#000">0</div>
<div class="t" style="left:371px;width:84px;top:521px;line-height:20px;text-align:center;font:12px 'Liberation Serif', serif;color:#000">NA</div>
<div class="t" style="left:456px;width:84px;top:521px;line-height:20px;text-align:center;font:12px 'Liberation Serif', serif;color:#000">0</div>
<div class="t" style="left:541px;width:84px;top:521px;line-height:20px;text-align:center;font:12px 'Liberation Serif', serif;color:#000">20</div>
<div class="t" style="left:626px;width:121px;top:521px;line-height:20px;text-align:center;font:12px 'Liberation Serif', serif;color:#000">20</div>
<div class="t" style="left:748px;width:156px;top:521px;line-height:20px;text-align:center;font:12px 'Liberation Serif', serif;color:#000">37.37</div>
<div class="t" style="left:905px;width:156px;top:521px;line-height:20px;text-align:center;font:12px 'Liberation Serif', serif;color:#000">-20</div>
<div class="t" style="left:1062px;width:156px;top:521px;line-height:20px;text-align:center;font:12px 'Liberation Serif', serif;color:#000">-37.37</div>
<div class="r" style="left:23px;top:580px;width:1322px;height:1px;background:#d4d4d4"></div>
<div class="r" style="left:0px;top:580px;width:22px;height:1px;background:#bdbdbd"></div>
<div class="t" style="left:5.0px;top:565px;font-size:10px;font-family:'Liberation Sans', sans-serif;font-weight:400;color:#0000f0;transform:scaleX(1.0966);transform-origin:0 0;-webkit-text-stroke:0.25px #0000f0;">33</div>
<div class="t" style="left:23px;width:98px;top:556px;line-height:20px;text-align:center;font:12px 'Liberation Serif', serif;color:#000">NA</div>
<div class="t" style="left:122px;width:78px;top:556px;line-height:20px;text-align:center;font:12px 'Liberation Serif', serif;color:#000">0</div>
<div class="t" style="left:201px;width:84px;top:556px;line-height:20px;text-align:center;font:12px 'Liberation Serif', serif;color:#000">0</div>
<div class="t" style="left:286px;width:84px;top:556px;line-height:20px;text-align:center;font:12px 'Liberation Serif', serif;color:#000">0</div>
<div class="t" style="left:371px;width:84px;top:556px;line-height:20px;text-align:center;font:12px 'Liberation Serif', serif;color:#000">NA</div>
<div class="t" style="left:456px;width:84px;top:556px;line-height:20px;text-align:center;font:12px 'Liberation Serif', serif;color:#000">0</div>
<div class="t" style="left:541px;width:84px;top:556px;line-height:20px;text-align:center;font:12px 'Liberation Serif', serif;color:#000">20</div>
<div class="t" style="left:626px;width:121px;top:556px;line-height:20px;text-align:center;font:12px 'Liberation Serif', serif;color:#000">20</div>
<div class="t" style="left:748px;width:156px;top:556px;line-height:20px;text-align:center;font:12px 'Liberation Serif', serif;color:#000">20.276</div>
<div class="t" style="left:905px;width:156px;top:556px;line-height:20px;text-align:center;font:12px 'Liberation Serif', serif;color:#000">-20</div>
<div class="t" style="left:1062px;width:156px;top:556px;line-height:20px;text-align:center;font:12px 'Liberation Serif', serif;color:#000">-20.276</div>
<div class="r" style="left:23px;top:615px;width:1322px;height:1px;background:#d4d4d4"></div>
<div class="r" style="left:0px;top:615px;width:22px;height:1px;background:#bdbdbd"></div>
<div class="t" style="left:5.0px;top:600px;font-size:10px;font-family:'Liberation Sans', sans-serif;font-weight:400;color:#0000f0;transform:scaleX(1.0966);transform-origin:0 0;-webkit-text-stroke:0.25px #0000f0;">34</div>
<div class="t" style="left:23px;width:98px;top:591px;line-height:20px;text-align:center;font:12px 'Liberation Serif', serif;color:#000">NA</div>
<div class="t" style="left:122px;width:78px;top:591px;line-height:20px;text-align:center;font:12px 'Liberation Serif', serif;color:#000">0</div>
<div class="t" style="left:201px;width:84px;top:591px;line-height:20px;text-align:center;font:12px 'Liberation Serif', serif;color:#000">0</div>
<div class="t" style="left:286px;width:84px;top:591px;line-height:20px;text-align:center;font:12px 'Liberation Serif', serif;color:#000">0</div>
<div class="t" style="left:371px;width:84px;top:591px;line-height:20px;text-align:center;font:12px 'Liberation Serif', serif;color:#000">NA</div>
<div class="t" style="left:456px;width:84px;top:591px;line-height:20px;text-align:center;font:12px 'Liberation Serif', serif;color:#000">0</div>
<div class="t" style="left:541px;width:84px;top:591px;line-height:20px;text-align:center;font:12px 'Liberation Serif', serif;color:#000">20</div>
<div class="t" style="left:626px;width:121px;top:591px;line-height:20px;text-align:center;font:12px 'Liberation Serif', serif;color:#000">20</div>
<div class="t" style="left:748px;width:156px;top:591px;line-height:20px;text-align:center;font:12px 'Liberation Serif', serif;color:#000">37.814</div>
<div class="t" style="left:905px;width:156px;top:591px;line-height:20px;text-align:center;font:12px 'Liberation Serif', serif;color:#000">-20</div>
<div class="t" style="left:1062px;width:156px;top:591px;line-height:20px;text-align:center;font:12px 'Liberation Serif', serif;color:#000">-37.814</div>
<div class="r" style="left:23px;top:650px;width:1322px;height:1px;background:#d4d4d4"></div>
<div class="r" style="left:0px;top:650px;width:22px;height:1px;background:#bdbdbd"></div>
<div class="t" style="left:5.0px;top:635px;font-size:10px;font-family:'Liberation Sans', sans-serif;font-weight:400;color:#0000f0;transform:scaleX(1.0966);transform-origin:0 0;-webkit-text-stroke:0.25px #0000f0;">35</div>
<div class="t" style="left:23px;width:98px;top:626px;line-height:20px;text-align:center;font:12px 'Liberation Serif', serif;color:#000">NA</div>
<div class="t" style="left:122px;width:78px;top:626px;line-height:20px;text-align:center;font:12px 'Liberation Serif', serif;color:#000">0</div>
<div class="t" style="left:201px;width:84px;top:626px;line-height:20px;text-align:center;font:12px 'Liberation Serif', serif;color:#000">0</div>
<div class="t" style="left:286px;width:84px;top:626px;line-height:20px;text-align:center;font:12px 'Liberation Serif', serif;color:#000">0</div>
<div class="t" style="left:371px;width:84px;top:626px;line-height:20px;text-align:center;font:12px 'Liberation Serif', serif;color:#000">NA</div>
<div class="t" style="left:456px;width:84px;top:626px;line-height:20px;text-align:center;font:12px 'Liberation Serif', serif;color:#000">0</div>
<div class="t" style="left:541px;width:84px;top:626px;line-height:20px;text-align:center;font:12px 'Liberation Serif', serif;color:#000">50</div>
<div class="t" style="left:626px;width:121px;top:626px;line-height:20px;text-align:center;font:12px 'Liberation Serif', serif;color:#000">50</div>
<div class="t" style="left:748px;width:156px;top:626px;line-height:20px;text-align:center;font:12px 'Liberation Serif', serif;color:#000">94.535</div>
<div class="t" style="left:905px;width:156px;top:626px;line-height:20px;text-align:center;font:12px 'Liberation Serif', serif;color:#000">-50</div>
<div class="t" style="left:1062px;width:156px;top:626px;line-height:20px;text-align:center;font:12px 'Liberation Serif', serif;color:#000">-94.535</div>
<div class="r" style="left:23px;top:685px;width:1322px;height:1px;background:#d4d4d4"></div>
<div class="r" style="left:0px;top:685px;width:22px;height:1px;background:#bdbdbd"></div>
<div class="t" style="left:5.0px;top:670px;font-size:10px;font-family:'Liberation Sans', sans-serif;font-weight:400;color:#0000f0;transform:scaleX(1.0966);transform-origin:0 0;-webkit-text-stroke:0.25px #0000f0;">36</div>
<div class="t" style="left:23px;width:98px;top:661px;line-height:20px;text-align:center;font:12px 'Liberation Serif', serif;color:#000">NA</div>
<div class="t" style="left:122px;width:78px;top:661px;line-height:20px;text-align:center;font:12px 'Liberation Serif', serif;color:#000">0</div>
<div class="t" style="left:201px;width:84px;top:661px;line-height:20px;text-align:center;font:12px 'Liberation Serif', serif;color:#000">0</div>
<div class="t" style="left:286px;width:84px;top:661px;line-height:20px;text-align:center;font:12px 'Liberation Serif', serif;color:#000">0</div>
<div class="t" style="left:371px;width:84px;top:661px;line-height:20px;text-align:center;font:12px 'Liberation Serif', serif;color:#000">NA</div>
<div class="t" style="left:456px;width:84px;top:661px;line-height:20px;text-align:center;font:12px 'Liberation Serif', serif;color:#000">0</div>
<div class="t" style="left:541px;width:84px;top:661px;line-height:20px;text-align:center;font:12px 'Liberation Serif', serif;color:#000">10</div>
<div class="t" style="left:626px;width:121px;top:661px;line-height:20px;text-align:center;font:12px 'Liberation Serif', serif;color:#000">10</div>
<div class="t" style="left:748px;width:156px;top:661px;line-height:20px;text-align:center;font:12px 'Liberation Serif', serif;color:#000">11.433</div>
<div class="t" style="left:905px;width:156px;top:661px;line-height:20px;text-align:center;font:12px 'Liberation Serif', serif;color:#000">-10</div>
<div class="t" style="left:1062px;width:156px;top:661px;line-height:20px;text-align:center;font:12px 'Liberation Serif', serif;color:#000">-11.433</div>
<div class="r" style="left:1344px;top:111px;width:1px;height:568px;background:#a8a8a8"></div>
<div class="r" style="left:1345px;top:111px;width:21px;height:567px;background:#e6e6e6"></div>
<div class="r" style="left:1347px;top:127px;width:16px;height:536px;background:#d9d9d9"></div>
<div class="r" style="left:1348px;top:113px;width:15px;height:14px;background:#fff;border:1px solid #c6c6c6;box-sizing:border-box"></div>
<svg class="r" style="left:1351px;top:117px;" width="9" height="5" viewBox="0 0 9 5"><path d="M0.5 4.5h8l-4-4z" fill="#666"/></svg>
<div class="r" style="left:1348px;top:141px;width:15px;height:157px;background:#fff;border:1px solid #b8b8b8;box-sizing:border-box"></div>
<div class="r" style="left:1348px;top:663px;width:15px;height:14px;background:#fff;border:1px solid #c6c6c6;box-sizing:border-box"></div>
<svg class="r" style="left:1351px;top:668px;" width="9" height="5" viewBox="0 0 9 5"><path d="M0.5 0.5h8l-4 4z" fill="#666"/></svg>
<div class="r" style="left:0px;top:678px;width:1366px;height:28px;background:#e6e6e6"></div>
<div class="r" style="left:0px;top:678px;width:1345px;height:1px;background:#a8a8a8"></div>
<svg class="r" style="left:25px;top:686px;" width="8" height="10" viewBox="0 0 8 10"><path d="M6 1v8L1.5 5z" fill="#185c37"/></svg>
<svg class="r" style="left:54px;top:686px;" width="8" height="10" viewBox="0 0 8 10"><path d="M2 1v8l4.5-4z" fill="#185c37"/></svg>
<div class="r" style="left:81px;top:694px;width:2.2px;height:2.2px;background:#185c37"></div>
<div class="r" style="left:85px;top:694px;width:2.2px;height:2.2px;background:#185c37"></div>
<div class="r" style="left:89px;top:694px;width:2.2px;height:2.2px;background:#185c37"></div>
<div class="r" style="left:100px;top:682px;width:1px;height:20px;background:#b9b9b9"></div>
<div class="t" style="left:112.2px;top:682px;font-size:13px;font-family:'Liberation Sans', sans-serif;font-weight:400;color:#444;transform:scaleX(0.9801);transform-origin:0 0;">001-120-015</div>
<div class="r" style="left:197px;top:682px;width:1px;height:20px;background:#b9b9b9"></div>
<div class="t" style="left:209.2px;top:682px;font-size:13px;font-family:'Liberation Sans', sans-serif;font-weight:400;color:#444;transform:scaleX(0.9801);transform-origin:0 0;">001-120-021</div>
<div class="r" style="left:294px;top:682px;width:1px;height:20px;background:#b9b9b9"></div>
<div class="t" style="left:306.2px;top:682px;font-size:13px;font-family:'Liberation Sans', sans-serif;font-weight:400;color:#444;transform:scaleX(0.9801);transform-origin:0 0;">001-120-022</div>
<div class="r" style="left:391px;top:682px;width:1px;height:20px;background:#b9b9b9"></div>
<div class="t" style="left:403.2px;top:682px;font-size:13px;font-family:'Liberation Sans', sans-serif;font-weight:400;color:#444;transform:scaleX(0.9801);transform-origin:0 0;">001-120-025</div>
<div class="r" style="left:488px;top:682px;width:1px;height:20px;background:#b9b9b9"></div>
<div class="t" style="left:500.2px;top:682px;font-size:13px;font-family:'Liberation Sans', sans-serif;font-weight:400;color:#444;transform:scaleX(0.9801);transform-origin:0 0;">001-120-027</div>
<div class="r" style="left:585px;top:682px;width:1px;height:20px;background:#b9b9b9"></div>
<div class="t" style="left:597.2px;top:682px;font-size:13px;font-family:'Liberation Sans', sans-serif;font-weight:400;color:#444;transform:scaleX(0.9801);transform-origin:0 0;">001-120-028</div>
<div class="r" style="left:682px;top:682px;width:1px;height:20px;background:#b9b9b9"></div>
<div class="t" style="left:694.2px;top:682px;font-size:13px;font-family:'Liberation Sans', sans-serif;font-weight:400;color:#444;transform:scaleX(0.9801);transform-origin:0 0;">001-120-029</div>
<div class="r" style="left:779px;top:682px;width:1px;height:20px;background:#b9b9b9"></div>
<div class="t" style="left:791.2px;top:682px;font-size:13px;font-family:'Liberation Sans', sans-serif;font-weight:400;color:#444;transform:scaleX(0.9801);transform-origin:0 0;">001-120-031</div>
<div class="r" style="left:876px;top:678px;width:97px;height:25px;background:#fff"></div>
<div class="r" style="left:877px;top:701px;width:96px;height:2px;background:#217346"></div>
<div class="t" style="left:888.2px;top:682px;font-size:13px;font-family:'Liberation Sans', sans-serif;font-weight:700;color:#217346;transform:scaleX(0.9815);transform-origin:0 0;">001-120-036</div>
<div class="t" style="left:985.2px;top:682px;font-size:13px;font-family:'Liberation Sans', sans-serif;font-weight:400;color:#444;transform:scaleX(0.9801);transform-origin:0 0;">001-120-037</div>
<div class="r" style="left:1070px;top:682px;width:1px;height:20px;background:#b9b9b9"></div>
<div class="r" style="left:1070px;top:678px;width:68px;height:27px;overflow:hidden">
<div class="t" style="left:12.4px;top:4px;font-size:13px;font-family:'Liberation Sans', sans-serif;font-weight:400;color:#444;transform:scaleX(0.9815);transform-origin:0 0;">001-120-038</div>
</div>
<div class="r" style="left:1146px;top:694px;width:2.2px;height:2.2px;background:#185c37"></div>
<div class="r" style="left:1150px;top:694px;width:2.2px;height:2.2px;background:#185c37"></div>
<div class="r" style="left:1154px;top:694px;width:2.2px;height:2.2px;background:#185c37"></div>
<svg class="r" style="left:1169px;top:683px;" width="18" height="18" viewBox="0 0 18 18"><circle cx="9" cy="9" r="7.8" fill="none" stroke="#6d6d6d" stroke-width="1.3"/><path d="M9 4.5v9M4.5 9h9" stroke="#6d6d6d" stroke-width="1.5"/></svg>
<div class="r" style="left:1206px;top:688px;width:2px;height:2px;background:#b0b0b0"></div>
<div class="r" style="left:1206px;top:692px;width:2px;height:2px;background:#b0b0b0"></div>
<div class="r" style="left:1206px;top:696px;width:2px;height:2px;background:#b0b0b0"></div>
<div class="r" style="left:1223px;top:685px;width:119px;height:15px;background:#d8d8d8"></div>
<div class="r" style="left:1223px;top:685px;width:15px;height:15px;background:#fff;border:1px solid #c6c6c6;box-sizing:border-box"></div>
<svg class="r" style="left:1227px;top:688px;" width="7" height="9" viewBox="0 0 7 9"><path d="M5 0.5v8l-4-4z" fill="#444"/></svg>
<div class="r" style="left:1327px;top:685px;width:15px;height:15px;background:#fff;border:1px solid #c6c6c6;box-sizing:border-box"></div>
<svg class="r" style="left:1332px;top:688px;" width="7" height="9" viewBox="0 0 7 9"><path d="M1.5 0.5v8l4-4z" fill="#444"/></svg>
<div class="r" style="left:1258px;top:685px;width:17px;height:15px;background:#fff;border:1px solid #c6c6c6;box-sizing:border-box"></div>
<div class="r" style="left:0px;top:706px;width:1366px;height:22px;background:#f3f2f1"></div>
<div class="r" style="left:0px;top:706px;width:1366px;height:1px;background:#cecece"></div>
<div class="t" style="left:7.3px;top:708px;font-size:13px;font-family:'Liberation Sans', sans-serif;font-weight:400;color:#444;transform:scaleX(0.8166);transform-origin:0 0;">Ready</div>
<div class="t" style="left:54.2px;top:708px;font-size:13px;font-family:'Liberation Sans', sans-serif;font-weight:400;color:#444;transform:scaleX(0.8866);transform-origin:0 0;">157 of 888 records found</div>
<svg class="r" style="left:202px;top:710px;" width="17" height="15" viewBox="0 0 17 15"><rect x="1" y="1" width="13" height="11" fill="none" stroke="#555" stroke-width="1.1"/><line x1="1" y1="3.5" x2="14" y2="3.5" stroke="#555"/><path d="M3 6h4M3 8.5h3" stroke="#555"/><circle cx="11.5" cy="9.5" r="3.5" fill="#f3f2f1" stroke="#555" stroke-width="1.1"/><circle cx="11.5" cy="9.5" r="1.5" fill="#555"/></svg>
<div class="r" style="left:1072px;top:707px;width:40px;height:21px;background:#d2d2d2"></div>
<svg class="r" style="left:1085px;top:710px;" width="13" height="13" viewBox="0 0 13 13"><rect x="0.6" y="0.6" width="11.8" height="11.8" fill="none" stroke="#3b3a39" stroke-width="1.2"/><path d="M4.6 0.6v11.8M8.4 0.6v11.8M0.6 4.6h11.8M0.6 8.4h11.8" stroke="#3b3a39" stroke-width="1.1"/></svg>
<svg class="r" style="left:1124px;top:709px;" width="16" height="15" viewBox="0 0 16 15"><rect x="1.8" y="1.8" width="12.5" height="11.8" fill="none" stroke="#3b3a39" stroke-width="1.2"/><rect x="4.8" y="3.8" width="6.5" height="7.8" fill="none" stroke="#3b3a39" stroke-width="1.1"/><path d="M6.3 5.8h3.5M6.3 7.7h3.5M6.3 9.6h3.5" stroke="#3b3a39" stroke-width="0.9"/></svg>
<svg class="r" style="left:1164px;top:709px;" width="16" height="15" viewBox="0 0 16 15"><rect x="1.8" y="1.8" width="12.5" height="11.8" fill="none" stroke="#3b3a39" stroke-width="1.2"/><path d="M1.8 8.4H9.6V1.8M5.6 1.8V8.4" fill="none" stroke="#3b3a39" stroke-width="1.1"/></svg>
<div class="r" style="left:1198px;top:716px;width:8px;height:1px;background:#555"></div>
<div class="r" style="left:1211px;top:716px;width:100px;height:1px;background:#777"></div>
<div class="r" style="left:1243px;top:712px;width:5px;height:11px;background:#666"></div>
<div class="r" style="left:1261px;top:713px;width:1px;height:7px;background:#666"></div>
<div class="r" style="left:1315px;top:716px;width:9px;height:1px;background:#555"></div>
<div class="r" style="left:1319px;top:712px;width:1px;height:9px;background:#555"></div>
<div class="t" style="left:1337.3px;top:708px;font-size:13px;font-family:'Liberation Sans', sans-serif;font-weight:400;color:#444;transform:scaleX(0.7760);transform-origin:0 0;">70%</div>
<div class="r" style="left:0px;top:728px;width:1366px;height:40px;background:linear-gradient(90deg,#243b45 0%,#22373f 35%,#1f3040 60%,#1c283d 80%,#1b253b 100%)"></div>
<svg class="r" style="left:15px;top:739px;" width="18" height="18" viewBox="0 0 18 18"><path d="M1 3.2L7.6 2.3V8.4H1z M8.6 2.1L17 1V8.4H8.6z M1 9.4H7.6V15.6L1 14.7z M8.6 9.4H17V17L8.6 15.8z" fill="#fff"/></svg>
<svg class="r" style="left:62px;top:737px;" width="20" height="20" viewBox="0 0 20 20"><circle cx="12.3" cy="8.5" r="5.3" fill="none" stroke="#fff" stroke-width="1.3"/><path d="M8.5 12.3L2.5 18.3" stroke="#fff" stroke-width="1.4"/></svg>
<svg class="r" style="left:111px;top:739px;" width="18" height="18" viewBox="0 0 18 18"><circle cx="9" cy="9" r="6.8" fill="none" stroke="#fff" stroke-width="1.7"/></svg>
<svg class="r" style="left:158px;top:736px;" width="26" height="23" viewBox="0 0 26 23"><path d="M3 12c2-5 7-10 14-11c3 3 3 17 0 21c-6-1-12-4-14-10z" fill="#e8962e"/><path d="M7 6l9 14M10 4l8 11M5 10l8 11M13 2l5 6" stroke="#d34fb0" stroke-width="1.6"/><path d="M18 9l5-2v9l-5-2z" fill="#ddd"/><circle cx="6.5" cy="11.5" r="1.3" fill="#333"/><path d="M4 6l3 2M2 12l3 0" stroke="#b05" stroke-width="0.8"/></svg>
<svg class="r" style="left:206px;top:736px;" width="36" height="26" viewBox="0 0 36 26"><path d="M2 8L13 1L24 8V22H2z" fill="#1f6fd0"/><path d="M2 8h22v14H2z" fill="#3a96ee"/><path d="M2 8L13 15L24 8z" fill="#fff"/><path d="M2 8L13 1L24 8z" fill="#1565c0"/><path d="M3 8L13 14.5L23 8z" fill="#fff"/><circle cx="27" cy="19" r="7.5" fill="#223a44" stroke="#c8c8c8" stroke-width="1"/><text x="27" y="23" font-family="Liberation Sans" font-size="10" fill="#fff" text-anchor="middle">١٧</text></svg>
<svg class="r" style="left:257px;top:737px;" width="24" height="22" viewBox="0 0 24 22"><path d="M7 1L23 6V15L7 13z" fill="#4aa3ef" stroke="#cfe3f5" stroke-width="0.8"/><path d="M1 17L11 14L17 17L7 21z" fill="#e6e6e6"/><path d="M13 15L17 13L20 14L16 16z" fill="#ddd"/></svg>
<div class="r" style="left:306px;top:736px;width:24px;height:24px;background:#000"></div>
<svg class="r" style="left:306px;top:736px;" width="24" height="24" viewBox="0 0 24 24"><path d="M8 4h3l3 10V4h3v16h-3l-3-10v10H8z" fill="#e50914"/></svg>
<div class="r" style="left:298px;top:766px;width:40px;height:2px;background:#76b9ed"></div>
<svg class="r" style="left:354px;top:735px;" width="25" height="26" viewBox="0 0 25 26"><path d="M8 7V3.5a2 2 0 0 1 2-2h5a2 2 0 0 1 2 2V7" fill="none" stroke="#e8e8e8" stroke-width="1.6"/><path d="M1 7h23v18H1z" fill="#f2f2f2"/><rect x="7" y="11" width="5" height="5" fill="#f25022"/><rect x="13" y="11" width="5" height="5" fill="#7fba00"/><rect x="7" y="17" width="5" height="5" fill="#00a4ef"/><rect x="13" y="17" width="5" height="5" fill="#ffb900"/></svg>
<svg class="r" style="left:403px;top:735px;" width="26" height="26" viewBox="0 0 26 26"><circle cx="13" cy="13" r="12" fill="#1e88e5"/><path d="M13 1a12 12 0 0 1 12 12c0 3-2 5-5 5h-5a3.5 3.5 0 0 1 0-7c2 0 3 1 3 1c-1-4-4-6-8-6c-4 0-7 2-9 5c1-6 6-10 12-10z" fill="#3fc97a"/><path d="M5 14c0-4 3-7 7-7c2 0 4 1 5 3c-3-1-7 1-7 5c0 3 3 6 8 6c2 0 4-.5 5-1.5c-2 4-6 6-10 6c-4 0-8-4-8-11.5z" fill="#1565c0"/><circle cx="14" cy="14" r="3" fill="#223a44"/></svg>
<svg class="r" style="left:453px;top:738px;" width="23" height="19" viewBox="0 0 23 19"><path d="M1 1h7l2 2h12v15H1z" fill="#f5b54c"/><path d="M1 4h21v14H1z" fill="#ffcc6a"/><rect x="1" y="1" width="7" height="2" fill="#e89a2a"/><path d="M6 11h11v7h-3v-4h-5v4H6z" fill="#3b8fe0"/></svg>
<div class="r" style="left:445px;top:766px;width:32px;height:2px;background:#76b9ed"></div>
<div class="r" style="left:477px;top:766px;width:8px;height:2px;background:#7b8fc8"></div>
<svg class="r" style="left:502px;top:737px;" width="25" height="22" viewBox="0 0 25 22"><rect x="7" y="0" width="18" height="22" rx="1" fill="#2b7cd3"/><rect x="7" y="0" width="18" height="5" fill="#41a5ee"/><rect x="7" y="11" width="18" height="6" fill="#185abd"/><rect x="7" y="17" width="18" height="5" fill="#103f91"/><rect x="0" y="5" width="13" height="13" rx="1" fill="#185abd"/><text x="6.5" y="15.5" font-family="Liberation Sans" font-weight="bold" font-size="10" fill="#fff" text-anchor="middle">W</text></svg>
<div class="r" style="left:539px;top:728px;width:48px;height:40px;background:#4b5b63"></div>
<div class="r" style="left:539px;top:766px;width:48px;height:2px;background:#76b9ed"></div>
<svg class="r" style="left:551px;top:737px;" width="25" height="22" viewBox="0 0 25 22"><rect x="7" y="0" width="18" height="22" rx="1" fill="#21a366"/><rect x="7" y="0" width="18" height="6" fill="#33c481"/><rect x="7" y="11" width="18" height="6" fill="#107c41"/><rect x="7" y="17" width="18" height="5" fill="#185c37"/><rect x="0" y="5" width="13" height="13" rx="1" fill="#107c41"/><text x="6.5" y="15.5" font-family="Liberation Sans" font-weight="bold" font-size="10" fill="#fff" text-anchor="middle">X</text></svg>
<svg class="r" style="left:600px;top:736px;" width="25" height="24" viewBox="0 0 25 24"><path d="M6 3c0-2 18-2 18 0v18c0 2-18 2-18 0z" fill="#a4373a"/><ellipse cx="15" cy="3" rx="9" ry="2.5" fill="#c8585b"/><path d="M6 10c0 2 18 2 18 0M6 16c0 2 18 2 18 0" stroke="#7a2b2e" fill="none"/><rect x="0" y="6" width="13" height="13" rx="1" fill="#a4373a"/><text x="6.5" y="16.5" font-family="Liberation Sans" font-weight="bold" font-size="10" fill="#fff" text-anchor="middle">A</text></svg>
<svg class="r" style="left:649px;top:737px;" width="24" height="24" viewBox="0 0 24 24"><circle cx="12" cy="12" r="11.5" fill="#db4437"/><path d="M12 12L1.6 6.5A11.5 11.5 0 0 0 12 23.5z" fill="#0f9d58"/><path d="M12 12L22.4 6.5A11.5 11.5 0 0 1 12 23.5z" fill="#ffcd40"/><path d="M12 12H22.4M12 12L6 22M12 12L2 6" stroke="none"/><circle cx="12" cy="12" r="5" fill="#fff"/><circle cx="12" cy="12" r="4" fill="#4285f4"/></svg>
<div class="r" style="left:641px;top:766px;width:40px;height:2px;background:#76b9ed"></div>
<svg class="r" style="left:697px;top:736px;" width="25" height="25" viewBox="0 0 25 25"><defs><linearGradient id="mg" x1="0" y1="1" x2="1" y2="0"><stop offset="0" stop-color="#0a7cff"/><stop offset="0.5" stop-color="#a033ff"/><stop offset="1" stop-color="#ff6d68"/></linearGradient></defs><path d="M12.5 1C6 1 1 5.8 1 12c0 3.3 1.4 6.2 3.6 8.2V24l3.5-1.9c1.4.4 2.9.6 4.4.6c6.5 0 11.5-4.8 11.5-11S19 1 12.5 1z" fill="url(#mg)"/><path d="M5 15.5l5.5-5.8 2.8 2.6 5.5-2.8-5.5 5.8-2.8-2.6z" fill="#fff" stroke="#fff" stroke-width="0.8" stroke-linejoin="round"/></svg>
<svg class="r" style="left:747px;top:736px;" width="24" height="24" viewBox="0 0 24 24"><path d="M2 2L22 4V17L2 15z" fill="#cfe1f3"/><path d="M4 4L20 5.5V14.5L4 13z" fill="#3a7fc8"/><path d="M5 8h14M5 11h14" stroke="#bfe0ff" stroke-width="1.5" stroke-dasharray="2 1"/><path d="M10 16v4M6 22c0-2 8-2 8 0z" stroke="#ccc" fill="#ddd" stroke-width="2"/></svg>
<svg class="r" style="left:797px;top:737px;" width="22" height="22" viewBox="0 0 22 22"><rect x="0" y="0" width="22" height="22" fill="#3aa0e8"/><path d="M0 22V13L9 6L22 16V22z" fill="#1b3d8a"/><path d="M12 9L22 16V22H16z" fill="#2a67c4"/><circle cx="16" cy="5" r="2" fill="#fff"/></svg>
<div class="r" style="left:788px;top:766px;width:39px;height:2px;background:#76b9ed"></div>
<svg class="r" style="left:909px;top:739px;" width="18" height="18" viewBox="0 0 18 18"><circle cx="11.5" cy="4.5" r="3" fill="none" stroke="#fff" stroke-width="1.2"/><path d="M7 12a5 5 0 0 1 9.5-1" fill="none" stroke="#fff" stroke-width="1.2"/><circle cx="6" cy="9" r="2.7" fill="none" stroke="#fff" stroke-width="1.2"/><path d="M1.5 16.5a4.6 4.6 0 0 1 9 0" fill="none" stroke="#fff" stroke-width="1.2"/></svg>
<svg class="r" style="left:1032px;top:738px;" width="21" height="20" viewBox="0 0 21 20"><path d="M13.5 1.2A9.2 9.2 0 1 1 1.3 13.3A8 8 0 0 0 13.5 1.2z" fill="#f7b500"/><path d="M13.5 1.2A9.2 9.2 0 1 1 1.3 13.3A10.5 10.5 0 0 0 13.5 1.2z" fill="#f7b500"/></svg>
<div class="t" style="left:1063.0px;top:739px;font-size:14px;font-family:'Liberation Sans', sans-serif;font-weight:400;color:#fff;transform:scaleX(0.8892);transform-origin:0 0;">17°C</div>
<div class="t" style="left:1100.0px;top:739px;font-size:14px;font-family:'Liberation Sans', sans-serif;font-weight:400;color:#fff;transform:scaleX(0.9570);transform-origin:0 0;">Clear</div>
<svg class="r" style="left:1146px;top:742px;" width="16" height="11" viewBox="0 0 16 11"><path d="M1.5 9L8 2.5L14.5 9" fill="none" stroke="#fff" stroke-width="1.3"/></svg>
<svg class="r" style="left:1168px;top:742px;" width="20" height="12" viewBox="0 0 20 12"><path d="M4.5 11h12a3.3 3.3 0 0 0 .3-6.6a5 5 0 0 0-9.2-.8a3.8 3.8 0 0 0-3.1 7.4z" fill="#e6e6e6"/></svg>
<svg class="r" style="left:1193px;top:741px;" width="18" height="13" viewBox="0 0 18 13"><path d="M3 1v3M6 1v3M1.5 4h6v2a3 3 0 0 1-6 0zM4.5 9v3.5" fill="none" stroke="#fff" stroke-width="1.1"/><rect x="8.5" y="4" width="8" height="7" fill="none" stroke="#bbb" stroke-width="1"/><path d="M10.5 5.5l4 4M14.5 5.5l-4 4" stroke="#fff" stroke-width="1.1"/></svg>
<div class="t" style="left:1220.3px;top:738px;font-size:13px;font-family:'Liberation Sans', sans-serif;font-weight:400;color:#fff;transform:scaleX(0.7880);transform-origin:0 0;">ENG</div>
<div class="t" style="left:1262.5px;top:729px;font-size:13px;color:#fff;transform:scaleX(0.86);transform-origin:0 0">09:32 م</div>
<div class="t" style="left:1258px;top:747px;font-size:15px;color:#fff;transform:scaleX(0.70);transform-origin:0 0">٢٠٢١/١١/٠٣</div>
<svg class="r" style="left:1323px;top:738px;" width="30" height="30" viewBox="0 0 30 30"><path d="M2 2h16v13H2z" fill="#fff"/><path d="M5 5.5h10M5 8.5h10M5 11.5h7" stroke="#1b253b" stroke-width="1.3"/><circle cx="18.5" cy="17" r="9.5" fill="#22303f" stroke="#bbb" stroke-width="1"/><text x="18.5" y="22" font-family="Liberation Sans" font-size="14" fill="#fff" text-anchor="middle">٢٧</text></svg>
<div class="r" style="left:1361px;top:728px;width:1px;height:40px;background:#737a84"></div>
<div class="t" style="left:600px;top:721px;font:26px 'Liberation Sans', sans-serif;line-height:34px;height:34px;color:rgba(190,190,190,0.45);letter-spacing:1.6px;-webkit-text-stroke:0.3px rgba(190,190,190,0.45)">mostaql.com</div>
<svg class="r" style="left:600px;top:676px;" width="170" height="56" viewBox="0 0 170 56"><g opacity="0.12" stroke="#777" stroke-width="7" fill="none" stroke-linecap="round"><circle cx="17.4" cy="35" r="9"/><path d="M30 3V36"/><path d="M17 42H150"/><circle cx="53" cy="28.5" r="8"/><path d="M73 26V42M90.5 26V42M108 26V42"/><circle cx="150.5" cy="33.6" r="10.5"/><g fill="#777" stroke="none"><circle cx="49" cy="5.3" r="4"/><circle cx="61" cy="5.3" r="4"/><circle cx="77.4" cy="15.2" r="4"/><circle cx="89.2" cy="15.2" r="4"/></g></g></svg>
</body></html>
